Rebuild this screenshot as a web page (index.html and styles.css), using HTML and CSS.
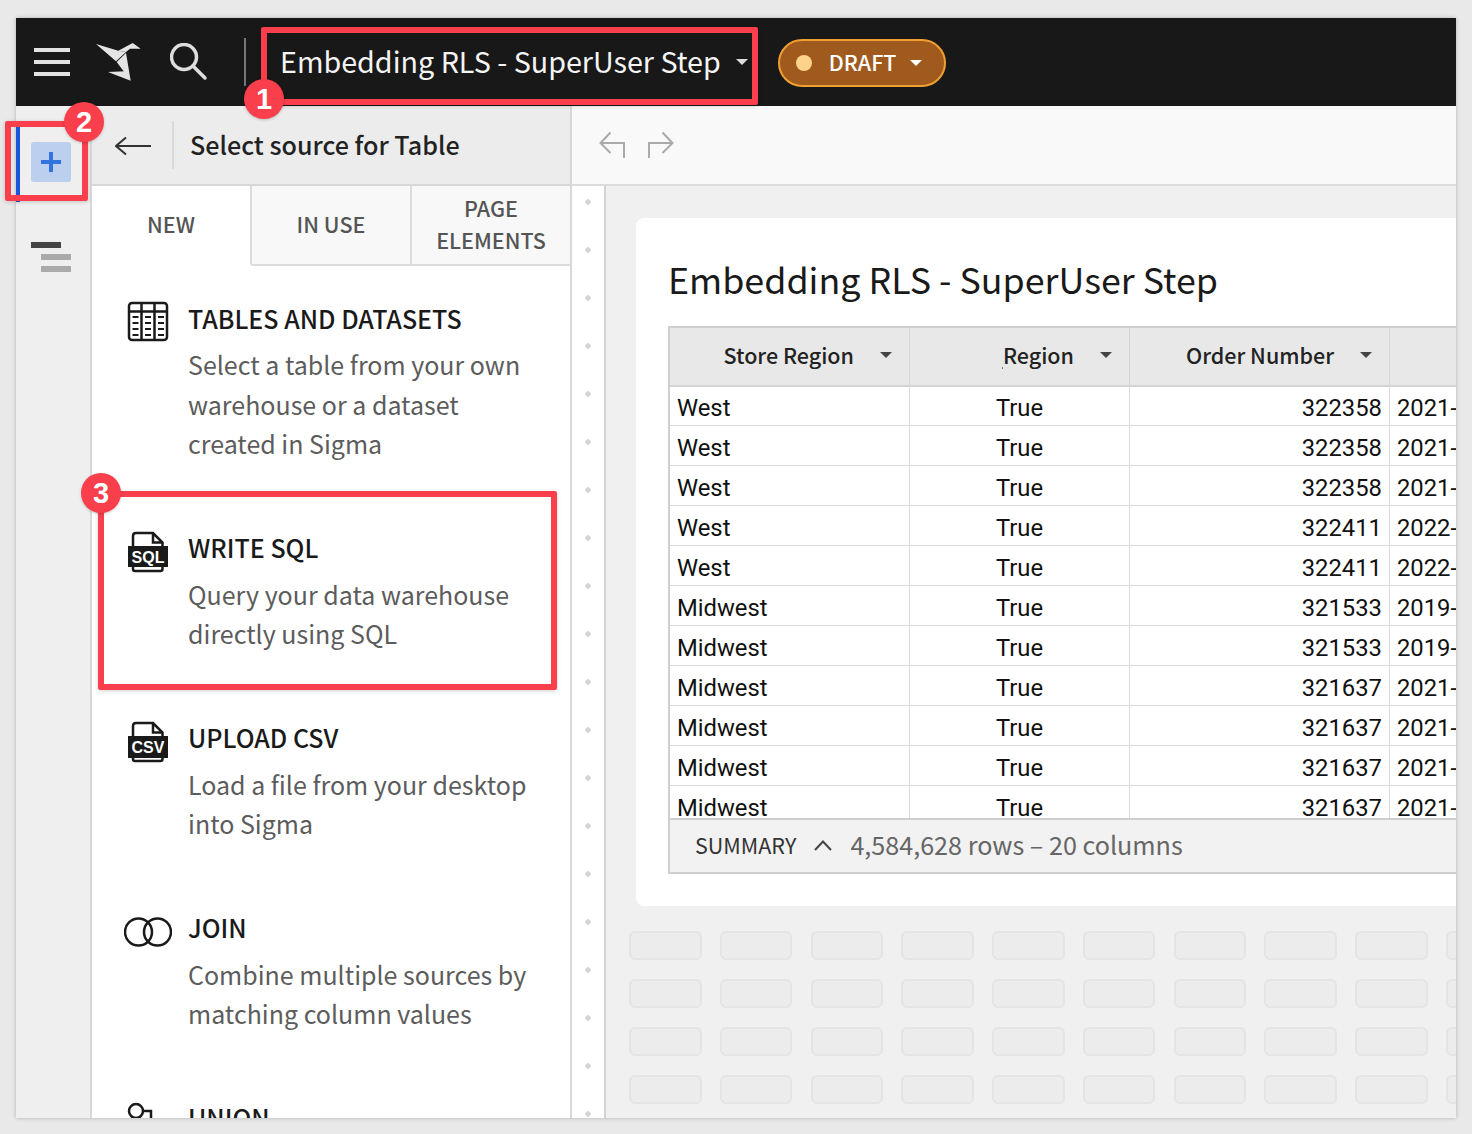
FILE: index.html
```html
<!DOCTYPE html>
<html lang="en">
<head>
    <meta charset="UTF-8">
    <meta name="viewport" content="width=device-width, initial-scale=1.0">
    <title>Embedding RLS - SuperUser Step</title>
    <link rel="stylesheet" href="styles.css">
</head>
<body>
    <div class="window">
        <header class="topbar">
            <div class="hamburger"><span></span><span></span><span></span></div>
            <svg class="logo" width="46" height="40" viewBox="96 42 46 40">
                <polygon points="96,44 118.3,50.7 126,52 116,61.3"/>
                <polygon points="116.7,62 126,53 130.7,80.7"/>
                <polygon points="118.3,50.7 132.7,43 140.7,48.7 130,48.7 126,52"/>
                <polygon points="108,72 125,71.3 130.7,80.7"/>
            </svg>
            <svg class="search" width="38" height="38" viewBox="0 0 38 38">
                <circle cx="14" cy="14" r="12.5"/>
                <path d="M23 23L35 35"/>
            </svg>
            <div class="top-sep"></div>
            <div class="doc-title">Embedding RLS - SuperUser Step</div>
            <span class="caret caret-title"></span>
            <div class="draft">
                <span class="draft-dot"></span>
                <span class="draft-label">DRAFT</span>
                <span class="caret caret-draft"></span>
            </div>
        </header>

        <div class="main">
            <aside class="rail">
                <div class="rail-add">
                    <div class="add-btn">
                        <svg width="20" height="20" viewBox="0 0 20 20"><path d="M10 0V20M0 10H20"/></svg>
                    </div>
                </div>
                <div class="rail-layers"><span></span><span></span><span></span></div>
            </aside>

            <section class="panel">
                <div class="panel-head">
                    <svg class="back" width="36" height="20" viewBox="0 0 36 20"><path d="M36 10H1M11 1.5L1 10L11 18.5"/></svg>
                    <div class="head-sep"></div>
                    <h2>Select source for Table</h2>
                </div>
                <div class="tabs">
                    <div class="tab active">NEW</div>
                    <div class="tab">IN USE</div>
                    <div class="tab last">PAGE<br>ELEMENTS</div>
                </div>
                <div class="sources">
                    <div class="source">
                        <svg class="source-icon" width="48" height="48" viewBox="0 0 48 48">
                            <rect x="5" y="5" width="38" height="37" rx="3"/>
                            <path d="M5 13.5H43M17.5 5V42M30.5 5V42"/>
                            <path class="dash" d="M8.5 19H14.5M21 19H27M34 19H40M8.5 25H14.5M21 25H27M34 25H40M8.5 31H14.5M21 31H27M34 31H40M8.5 37H14.5M21 37H27M34 37H40"/>
                        </svg>
                        <div>
                            <h3>TABLES AND DATASETS</h3>
                            <p>Select a table from your own<br>warehouse or a dataset<br>created in Sigma</p>
                        </div>
                    </div>
                    <div class="source">
                        <svg class="source-icon" width="48" height="48" viewBox="0 0 48 48">
                            <path d="M9 18V8Q9 5 12 5H29L38.5 14.500V18M9 39V41Q9 43 11 43H36.500Q38.500 43 38.500 41V39M29 5V14.500H38.500"/>
                            <rect class="band" x="4" y="18" width="40" height="21"/>
                            <text class="band-text" x="24" y="35" text-anchor="middle">SQL</text>
                        </svg>
                        <div>
                            <h3>WRITE SQL</h3>
                            <p>Query your data warehouse<br>directly using SQL</p>
                        </div>
                    </div>
                    <div class="source">
                        <svg class="source-icon" width="48" height="48" viewBox="0 0 48 48">
                            <path d="M9 18V8Q9 5 12 5H29L38.5 14.500V18M9 39V41Q9 43 11 43H36.500Q38.500 43 38.500 41V39M29 5V14.500H38.500"/>
                            <rect class="band" x="4" y="18" width="40" height="22"/>
                            <text class="band-text" x="24" y="35" text-anchor="middle">CSV</text>
                        </svg>
                        <div>
                            <h3>UPLOAD CSV</h3>
                            <p>Load a file from your desktop<br>into Sigma</p>
                        </div>
                    </div>
                    <div class="source">
                        <svg class="source-icon" width="48" height="48" viewBox="0 0 48 48">
                            <circle cx="14.500" cy="24" r="13.500"/>
                            <circle cx="33.500" cy="24" r="13.500"/>
                        </svg>
                        <div>
                            <h3>JOIN</h3>
                            <p>Combine multiple sources by<br>matching column values</p>
                        </div>
                    </div>
                    <div class="source">
                        <svg class="source-icon" width="48" height="48" viewBox="0 0 48 48">
                            <circle cx="12" cy="13" r="7"/>
                            <path d="M19 13H27V28H12V20"/>
                        </svg>
                        <div>
                            <h3>UNION</h3>
                        </div>
                    </div>
                </div>
            </section>

            <section class="content">
                <div class="toolbar">
                    <svg width="26" height="28" viewBox="0 0 26 28"><path d="M25 27V12H2M11.500 1.500L1.500 12L11.500 22"/></svg>
                    <svg width="26" height="28" viewBox="0 0 26 28"><path d="M1 27V12H24M14.500 1.500L24.500 12L14.500 22"/></svg>
                </div>
                <div class="work">
                    <div class="gutter"></div>
                    <div class="canvas">
                        <div class="card">
                            <h1>Embedding RLS - SuperUser Step</h1>
                            <div class="data">
                                <div class="data-scroll">
                                    <table>
                                        <thead>
                                            <tr>
                                                <th class="col-a"><div class="th-in">Store Region<span class="th-caret"></span></div></th>
                                                <th class="col-b"><div class="th-in"><span class="speck"></span>Region<span class="th-caret"></span></div></th>
                                                <th class="col-c"><div class="th-in">Order Number<span class="th-caret"></span></div></th>
                                                <th class="col-d"></th>
                                            </tr>
                                        </thead>
                                        <tbody>
                                            <tr><td>West</td><td class="mid">True</td><td class="num">322358</td><td>2021-</td></tr>
                                            <tr><td>West</td><td class="mid">True</td><td class="num">322358</td><td>2021-</td></tr>
                                            <tr><td>West</td><td class="mid">True</td><td class="num">322358</td><td>2021-</td></tr>
                                            <tr><td>West</td><td class="mid">True</td><td class="num">322411</td><td>2022-</td></tr>
                                            <tr><td>West</td><td class="mid">True</td><td class="num">322411</td><td>2022-</td></tr>
                                            <tr><td>Midwest</td><td class="mid">True</td><td class="num">321533</td><td>2019-</td></tr>
                                            <tr><td>Midwest</td><td class="mid">True</td><td class="num">321533</td><td>2019-</td></tr>
                                            <tr><td>Midwest</td><td class="mid">True</td><td class="num">321637</td><td>2021-</td></tr>
                                            <tr><td>Midwest</td><td class="mid">True</td><td class="num">321637</td><td>2021-</td></tr>
                                            <tr><td>Midwest</td><td class="mid">True</td><td class="num">321637</td><td>2021-</td></tr>
                                            <tr><td>Midwest</td><td class="mid">True</td><td class="num">321637</td><td>2021-</td></tr>
                                        </tbody>
                                    </table>
                                </div>
                                <div class="summary">
                                    <span class="summary-label">SUMMARY</span>
                                    <svg width="18" height="12" viewBox="0 0 18 12"><path d="M1 11L9 2.500L17 11"/></svg>
                                    <span class="summary-count">4,584,628 rows – 20 columns</span>
                                </div>
                            </div>
                        </div>
                        <div class="slots">
                            <span></span><span></span><span></span><span></span><span></span><span></span><span></span><span></span><span></span><span></span>
                            <span></span><span></span><span></span><span></span><span></span><span></span><span></span><span></span><span></span><span></span>
                            <span></span><span></span><span></span><span></span><span></span><span></span><span></span><span></span><span></span><span></span>
                            <span></span><span></span><span></span><span></span><span></span><span></span><span></span><span></span><span></span><span></span>
                        </div>
                    </div>
                </div>
            </section>
        </div>
    </div>

    <!-- callouts drawn over the screenshot -->
    <div class="callout box-one"></div>
    <div class="callout box-two"></div>
    <div class="callout box-three"></div>
    <div class="badge badge-one">1</div>
    <div class="badge badge-two">2</div>
    <div class="badge badge-three">3</div>
</body>
</html>
```

FILE: styles.css
```css
html, body {
    margin: 0;
    padding: 0;
}
body {
    position: relative;
    width: 1472px;
    height: 1134px;
    overflow: hidden;
    background-color: #e9e9e9;
    font-family: "Noto Sans CJK JP", "Noto Sans", sans-serif;
    color: #1a1a1a;
}
h1, h2, h3, p {
    margin: 0;
    font-weight: normal;
}
.window {
    position: absolute;
    left: 16px;
    top: 18px;
    width: 1440px;
    height: 1100px;
    overflow: hidden;
    background-color: white;
    box-shadow: 0 0 4px rgba(0, 0, 0, 0.25);
}

/* top bar */
.topbar {
    display: flex;
    align-items: center;
    height: 88px;
    padding-left: 18px;
    background-color: #181818;
}
.hamburger {
    display: flex;
    flex-direction: column;
    gap: 8px;
    width: 36px;
}
.hamburger span {
    height: 4px;
    background-color: #e2e2e2;
}
.logo {
    margin-left: 26px;
    fill: #e4e4e4;
}
.search {
    margin-left: 28px;
    fill: none;
    stroke: #dddddd;
    stroke-width: 3.5;
    stroke-linecap: round;
}
.top-sep {
    width: 2px;
    height: 48px;
    margin-left: 36px;
    background-color: #777777;
}
.doc-title {
    margin: 0 0 2px 34px;
    font-size: 28.700px;
    line-height: 48px;
    color: #f4f4f4;
    white-space: nowrap;
}
.caret {
    width: 0;
    height: 0;
    border-style: solid;
    border-color: #dddddd transparent transparent transparent;
}
.caret-title {
    margin-left: 15px;
    border-width: 6px 6.5px 0 6.5px;
}
.draft {
    display: flex;
    align-items: center;
    box-sizing: border-box;
    width: 168px;
    height: 48px;
    margin: 2px 0 0 30px;
    padding-left: 16px;
    background-color: #a05a1e;
    border: 2px solid #f0a030;
    border-radius: 24px;
}
.draft-dot {
    width: 16px;
    height: 16px;
    border-radius: 50%;
    background-color: #fdd28a;
}
.draft-label {
    margin: 0 0 2px 17px;
    font-size: 21.500px;
    font-weight: 500;
    line-height: 32px;
    color: #ffffff;
}
.caret-draft {
    margin-left: 14px;
    border-width: 6px 6.500px 0 6.500px;
    border-top-color: #ffffff;
}

.main {
    display: flex;
    height: 1012px;
}

/* left rail */
.rail {
    box-sizing: border-box;
    width: 76px;
    flex-shrink: 0;
    padding-top: 20px;
    background-color: #efefef;
    border-right: 2px solid #d8d8d8;
}
.rail-add {
    box-sizing: border-box;
    height: 76px;
    padding: 16px 0 0 11px;
    border-left: 4px solid #1a56db;
    margin-bottom: 40px;
}
.add-btn {
    display: flex;
    align-items: center;
    justify-content: center;
    width: 40px;
    height: 40px;
    border-radius: 3px;
    background-color: #bdcfee;
}
.add-btn svg {
    fill: none;
    stroke: #3373e0;
    stroke-width: 4;
}
.rail-layers {
    display: flex;
    flex-direction: column;
    gap: 6px;
    padding-left: 15px;
}
.rail-layers span {
    width: 30px;
    height: 6px;
    margin-left: 10px;
    background-color: #aaaaaa;
}
.rail-layers span:first-child {
    margin-left: 0;
    background-color: #444444;
}

/* source panel */
.panel {
    box-sizing: border-box;
    width: 480px;
    flex-shrink: 0;
    overflow: hidden;
    border-right: 2px solid #d8d8d8;
}
.panel-head {
    display: flex;
    align-items: center;
    box-sizing: border-box;
    height: 80px;
    background-color: #ececec;
    border-bottom: 2px solid #d8d8d8;
}
.back {
    margin: 2px 0 0 23px;
    fill: none;
    stroke: #333333;
    stroke-width: 2;
}
.head-sep {
    width: 2px;
    height: 48px;
    margin-left: 21px;
    background-color: #dadada;
}
.panel-head h2 {
    margin: 0 0 2px 16px;
    font-size: 25.100px;
    font-weight: 500;
    line-height: 40px;
    color: #222222;
}
.tabs {
    display: grid;
    grid-template-columns: 160px 160px 158px;
    height: 80px;
}
.tab {
    display: flex;
    align-items: center;
    justify-content: center;
    box-sizing: border-box;
    padding-bottom: 2px;
    text-align: center;
    font-size: 21.500px;
    font-weight: 500;
    line-height: 32px;
    color: #555555;
    background-color: #f8f8f8;
    border-right: 2px solid #dcdcdc;
    border-bottom: 2px solid #dcdcdc;
}
.tab.active {
    background-color: white;
    border-bottom-color: white;
}
.tab.last {
    border-right: none;
}
.sources {
    padding: 33.500px 0 0 32px;
}
.source {
    display: flex;
    gap: 16px;
    padding-bottom: 65.500px;
}
.source-icon {
    flex-shrink: 0;
    margin-top: -1.500px;
    fill: none;
    stroke: #1a1a1a;
    stroke-width: 2.500;
}
.source-icon .dash {
    stroke-width: 2;
}
.source-icon .band {
    fill: #1a1a1a;
    stroke: none;
}
.source-icon .band-text {
    fill: #ffffff;
    stroke: none;
    font-family: "Liberation Sans", sans-serif;
    font-size: 16px;
    font-weight: bold;
}
.source h3 {
    margin-bottom: 9.500px;
    font-size: 25px;
    font-weight: 500;
    line-height: 36px;
    color: #1a1a1a;
}
.source p {
    font-size: 25px;
    line-height: 39.500px;
    color: #5c5c5c;
}

/* right side */
.content {
    flex: 1;
    min-width: 0;
}
.toolbar {
    display: flex;
    align-items: center;
    gap: 23px;
    box-sizing: border-box;
    height: 80px;
    padding-left: 27px;
    background-color: #f9f9f9;
    border-bottom: 2px solid #dcdcdc;
}
.toolbar svg {
    fill: none;
    stroke: #aaaaaa;
    stroke-width: 2;
}
.work {
    display: flex;
    height: 932px;
}
.gutter {
    width: 32px;
    flex-shrink: 0;
    background-color: white;
    background-image: radial-gradient(circle, #d6d6d6 2.500px, transparent 3px);
    background-size: 32px 48px;
    background-position: 0 -8px;
    border-right: 2px solid #d4d4d4;
}
.canvas {
    flex: 1;
    min-width: 0;
    overflow: hidden;
    background-color: #f0f0f0;
}
.card {
    box-sizing: border-box;
    height: 688px;
    margin: 32px 0 0 30px;
    padding: 33px 0 0 32px;
    background-color: white;
    border-radius: 8px 0 0 8px;
}
.card h1 {
    font-size: 35.800px;
    line-height: 54px;
    color: #1a1a1a;
}
.data {
    height: 548px;
    margin-top: 21px;
    box-sizing: border-box;
    border: 2px solid #cfcfcf;
    border-right: none;
    width: 820px;
}
.data-scroll {
    height: 490px;
    overflow: hidden;
}
table {
    width: 820px;
    table-layout: fixed;
    border-collapse: separate;
    border-spacing: 0;
    font-family: Roboto, sans-serif;
    font-size: 23.800px;
}
.col-a { width: 240px; }
.col-b { width: 220px; }
.col-c { width: 260px; }
.col-d { width: 100px; }
th {
    box-sizing: border-box;
    height: 59px;
    padding: 0 0 4px;
    font-family: "Noto Sans CJK JP", "Noto Sans", sans-serif;
    font-weight: 500;
    background-color: #e8e8e8;
    border-right: 1px solid #d4d4d4;
    border-bottom: 2px solid #d4d4d4;
}
.col-d {
    border-right: none;
}
.th-in {
    position: relative;
    display: flex;
    align-items: center;
    justify-content: flex-end;
    gap: 26px;
    padding-right: 17px;
    font-size: 21.500px;
    line-height: 32px;
    color: #222222;
}
.th-caret {
    width: 0;
    height: 0;
    border-style: solid;
    border-width: 6px 6px 0 6px;
    border-color: #444444 transparent transparent transparent;
}
.speck {
    position: absolute;
    left: 92px;
    bottom: 2px;
    width: 1px;
    height: 2px;
    background-color: #777777;
}
td {
    box-sizing: border-box;
    height: 40px;
    padding: 5px 7px 0;
    overflow: hidden;
    white-space: nowrap;
    line-height: 34px;
    color: #111111;
    border-right: 1px solid #dadada;
    border-bottom: 1px solid #dadada;
    vertical-align: bottom;
}
tbody tr:first-child td {
    height: 39px;
    padding-top: 4px;
}
td:last-child {
    border-right: none;
}
td.mid {
    text-align: center;
}
td.num {
    text-align: right;
}
.summary {
    display: flex;
    align-items: center;
    box-sizing: border-box;
    height: 54px;
    padding: 0 0 2px 25px;
    background-color: #f2f2f2;
    border-top: 2px solid #cfcfcf;
}
.summary svg {
    margin-left: 18px;
    fill: none;
    stroke: #444444;
    stroke-width: 2;
}
.summary-label {
    font-size: 21.500px;
    line-height: 32px;
    color: #333333;
}
.summary-count {
    margin: 0 0 2px 18px;
    font-size: 25.150px;
    line-height: 36px;
    color: #666666;
}
.slots {
    display: grid;
    grid-template-columns: repeat(10, 72.670px);
    column-gap: 18.100px;
    row-gap: 19px;
    margin: 25px 0 0 23px;
}
.slots span {
    box-sizing: border-box;
    height: 29px;
    background-color: #ececec;
    border: 2px solid #e4e4e4;
    border-radius: 6px;
}

/* callouts */
.callout {
    position: absolute;
    box-sizing: border-box;
    border: 6px solid #f93e4c;
    border-radius: 2px;
    box-shadow: 0 1px 4px rgba(0, 0, 0, 0.18);
}
.box-one {
    left: 261px;
    top: 27px;
    width: 497px;
    height: 78px;
}
.box-two {
    left: 5px;
    top: 121px;
    width: 83px;
    height: 80px;
}
.box-three {
    left: 98px;
    top: 491px;
    width: 459px;
    height: 199px;
}
.badge {
    position: absolute;
    width: 40px;
    height: 40px;
    border-radius: 50%;
    background-color: #f93e4c;
    color: white;
    text-align: center;
    font-family: "Liberation Sans", sans-serif;
    font-size: 29px;
    font-weight: bold;
    line-height: 40px;
    box-shadow: 0 1px 3px rgba(0, 0, 0, 0.2);
}
.badge-one {
    left: 244px;
    top: 79px;
}
.badge-two {
    left: 64px;
    top: 102px;
}
.badge-three {
    left: 81px;
    top: 473px;
}
```
